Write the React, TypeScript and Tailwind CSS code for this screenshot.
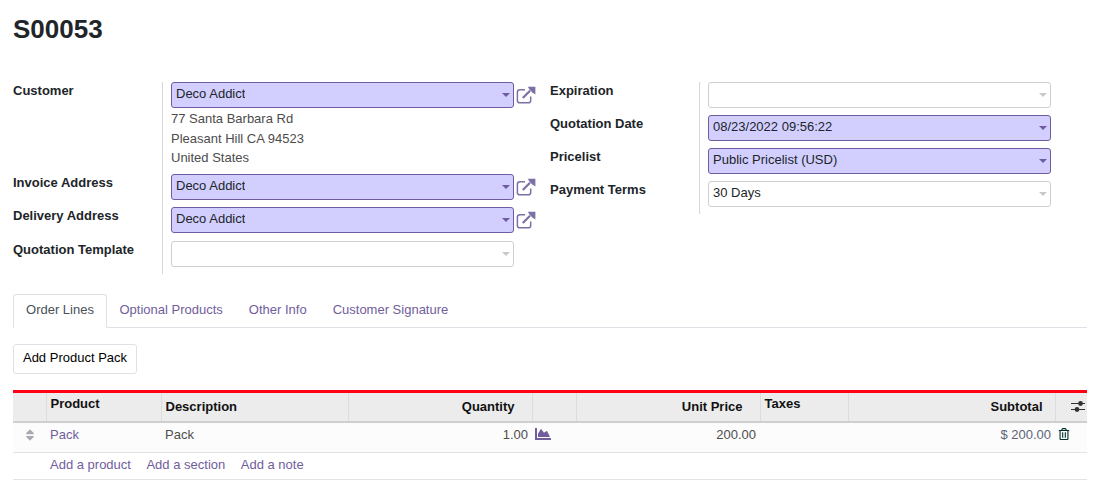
import React from "react";
import { FaChartArea, FaRegTrashAlt, FaSort } from "react-icons/fa";

function ExtLink() {
  return (
    <svg width="20" height="18" viewBox="0 0 20 18" className="ml-[2px] shrink-0 text-[#7d70a6]">
      <path d="M9 3.7H4Q1.4 3.7 1.4 6v8.4Q1.4 16.8 4 16.8h8.2q2.5 0 2.5-2.4V10.4" fill="none" stroke="currentColor" strokeWidth="1.5" />
      <path d="M6.8 12 14 4.8" fill="none" stroke="currentColor" strokeWidth="2.2" />
      <path d="M11.8 0.8H19.4V8.4L16.4 6.4 13.6 3.8Z" fill="currentColor" />
    </svg>
  );
}

function Sliders() {
  return (
    <svg width="14" height="13" viewBox="0 0 14 13" className="ml-[11px] text-[#333]">
      <path d="M0 3.5H14M0 9.5H14" stroke="currentColor" strokeWidth="1" />
      <circle cx="9.5" cy="3.5" r="2.4" fill="currentColor" />
      <circle cx="6" cy="9.5" r="2.4" fill="currentColor" />
    </svg>
  );
}

function Field({ value, req, ext }: { value?: string; req?: boolean; ext?: boolean }) {
  return (
    <div className="flex items-center">
      <div
        className={
          "flex h-[26px] w-[343px] items-center justify-between rounded-[3px] border pb-[2px] pl-[4px] pr-[3px] " +
          (req ? "border-[#6f5b9f] bg-[#d2cfff]" : "border-[#cfcfcf] bg-white")
        }
      >
        <span className="truncate text-[#212529]">{value}</span>
        <span
          className={
            "mt-[2px] h-0 w-0 border-x-[4px] border-t-[4px] border-x-transparent " +
            (req ? "border-t-[#6f5b9f]" : "border-t-[#c9c9c9]")
          }
        />
      </div>
      {ext && <ExtLink />}
    </div>
  );
}

function Label({ children, className = "" }: { children: React.ReactNode; className?: string }) {
  return <div className={"font-bold leading-[17px] text-[#212529] " + className}>{children}</div>;
}

const head = "border-l border-[#dcdcdc] font-bold text-[#111] text-[13px] px-[4px] align-middle";

export default function App() {
  return (
    <div className="min-h-[481px] w-[1102px] bg-white font-['Liberation_Sans',sans-serif] text-[13px] text-[#212529]">
      <h1 className="pl-[13px] pt-[13px] text-[26px] font-bold leading-[32px] text-[#212529]">S00053</h1>

      <div className="mt-[37px] flex pl-[13px]">
        <div className="flex w-[537px]">
          <div className="h-[192px] w-[149px] shrink-0">
            <Label>Customer</Label>
            <Label className="mt-[75px]">Invoice Address</Label>
            <Label className="mt-[16px]">Delivery Address</Label>
            <Label className="mt-[17px]">Quotation Template</Label>
          </div>
          <div className="flex h-[192px] flex-col border-l border-[#d8d8d8] pl-[8px]">
            <Field value="Deco Addict" req ext />
            <div className="mb-[6px] mt-[1px] leading-[19.5px] text-[#4c4c4c]">
              <div>77 Santa Barbara Rd</div>
              <div>Pleasant Hill CA 94523</div>
              <div>United States</div>
            </div>
            <Field value="Deco Addict" req ext />
            <div className="mt-[7px]"><Field value="Deco Addict" req ext /></div>
            <div className="mt-[8px]"><Field /></div>
          </div>
        </div>
        <div className="flex">
          <div className="w-[149px] shrink-0">
            <Label>Expiration</Label>
            <Label className="mt-[16px]">Quotation Date</Label>
            <Label className="mt-[16px]">Pricelist</Label>
            <Label className="mt-[16px]">Payment Terms</Label>
          </div>
          <div className="flex h-[132px] flex-col gap-[7px] border-l border-[#d8d8d8] pl-[8px]">
            <Field />
            <Field value="08/23/2022 09:56:22" req />
            <Field value="Public Pricelist (USD)" req />
            <Field value="30 Days" />
          </div>
        </div>
      </div>

      <div className="ml-[13px] mt-[20px] flex h-[34px] w-[1074px] items-end border-b border-[#dee2e6]">
        <div className="-mb-px flex h-[34px] w-[94px] items-center justify-center rounded-t-[3px] border border-[#dee2e6] border-b-white bg-white pb-[2px] text-[#495057]">Order Lines</div>
        <div className="flex h-[33px] items-center pb-[2px] pl-[12.5px] text-[#715d9c]">
          <span>Optional Products</span>
          <span className="ml-[26px]">Other Info</span>
          <span className="ml-[26px]">Customer Signature</span>
        </div>
      </div>

      <button className="ml-[13px] mt-[16px] block h-[30px] w-[124px] rounded-[3px] border border-[#dee2e6] bg-white pb-[2px] text-center text-[13px] text-black">Add Product Pack</button>

      <table className="ml-[13px] mt-[16px] w-[1074px] table-fixed border-collapse border-t-[3px] border-[#ff0015]">
        <colgroup>
          <col className="w-[33px]" />
          <col className="w-[115px]" />
          <col className="w-[187px]" />
          <col className="w-[184px]" />
          <col className="w-[44px]" />
          <col className="w-[184px]" />
          <col className="w-[88px]" />
          <col className="w-[207px]" />
          <col className="w-[32px]" />
        </colgroup>
        <thead>
          <tr className="h-[30px] border-b-2 border-[#cfcfcf] bg-[#ececec]">
            <th />
            <th className={head + " text-left"}><div className="-mt-[6px]">Product</div></th>
            <th className={head + " text-left"}>Description</th>
            <th className={head + " pr-[17px] text-right"}>Quantity</th>
            <th className={head} />
            <th className={head + " pr-[17px] text-right"}>Unit Price</th>
            <th className={head + " text-left"}><div className="-mt-[6px]">Taxes</div></th>
            <th className={head + " pr-[12px] text-right"}>Subtotal</th>
            <th className={head}><Sliders /></th>
          </tr>
        </thead>
        <tbody>
          <tr className="h-[31px] border-b border-[#e3e3e3] bg-[#fcfcfc] text-[#4c4c4c]">
            <td className="pb-[4px] pl-[10px]"><FaSort className="text-[14px] text-[#a9a9b3]" /></td>
            <td className="pb-[6px] pl-[4px] text-[#715d9c]">Pack</td>
            <td className="pb-[6px] pl-[4px]">Pack</td>
            <td className="pb-[6px] pr-[4px] text-right">1.00</td>
            <td className="pb-[6px] pl-[3px]"><FaChartArea className="text-[16px] text-[#715d9c]" /></td>
            <td className="pb-[6px] pr-[4px] text-right">200.00</td>
            <td />
            <td className="pb-[6px] pr-[4px] text-right text-[#5b6478]">$ 200.00</td>
            <td className="pb-[6px]"><FaRegTrashAlt className="ml-[3px] text-[12px] text-[#02312b]" /></td>
          </tr>
          <tr className="h-[27px] border-b border-[#e3e3e3]">
            <td />
            <td colSpan={8} className="pb-[2px] pl-[4px] text-[#715d9c]">
              <span>Add a product</span>
              <span className="ml-[15.5px]">Add a section</span>
              <span className="ml-[15.5px]">Add a note</span>
            </td>
          </tr>
        </tbody>
      </table>
    </div>
  );
}
